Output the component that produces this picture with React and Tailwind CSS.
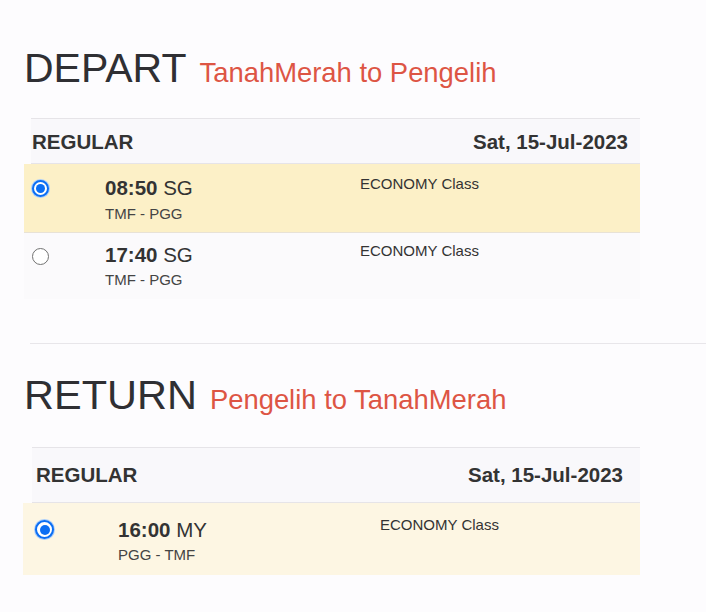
import React from 'react';

const Radio = ({ checked, size = 'sm' }) => {
  const box = size === 'lg' ? 'w-[19px] h-[19px]' : 'w-[17px] h-[17px]';
  const dot = size === 'lg' ? 'w-[10px] h-[10px]' : 'w-[9px] h-[9px]';
  if (!checked) {
    return <span className={`${box} block shrink-0 rounded-full border border-[#727272] bg-white`} />;
  }
  return (
    <span className={`${box} shrink-0 rounded-full border-2 border-[#0b6ef3] bg-white flex items-center justify-center shadow-[0_0_0_1px_#a9cdfb]`}>
      <span className={`${dot} rounded-full bg-[#0b6ef3]`} />
    </span>
  );
};

const App = () => {
  return (
    <div className="min-h-[612px] bg-[#fdfcfe] text-[#333] pl-[24px] pt-[46px] font-['Liberation_Sans',Arial,sans-serif]">
      {/* depart */}
      <div className="flex items-baseline gap-[13px]">
        <h1 className="text-[41px] leading-[44px] text-[#2f2f33]">DEPART</h1>
        <span className="text-[27.4px] leading-[32px] text-[#dd5544]">TanahMerah to Pengelih</span>
      </div>

      <div className="mt-[28px] w-[616px]">
        <div className="ml-[7px] border-t border-b border-[#e6e4e8] bg-[#f9f8fb] flex justify-between pt-[10px] pb-[8px] pl-[1px] pr-[12px]">
          <span className="text-[20.5px] leading-[26px] font-bold">REGULAR</span>
          <span className="text-[20.5px] leading-[26px] font-bold">Sat, 15-Jul-2023</span>
        </div>

        <div className="h-[69px] flex bg-[#fcf0c7] border-b border-[#e8e2d6]">
          <div className="w-[81px] pl-[8px] pt-[16px]">
            <Radio checked />
          </div>
          <div className="w-[255px] pt-[11px]">
            <div className="text-[20.5px] leading-[26px]"><b>08:50</b> SG</div>
            <div className="mt-[3px] text-[15px] leading-[20px] text-[#444]">TMF - PGG</div>
          </div>
          <div className="pt-[10px] text-[15px] leading-[20px]">ECONOMY Class</div>
        </div>

        <div className="h-[66px] flex bg-[#fbfafc]">
          <div className="w-[81px] pl-[8px] pt-[15px]">
            <Radio />
          </div>
          <div className="w-[255px] pt-[9px]">
            <div className="text-[20.5px] leading-[26px]"><b>17:40</b> SG</div>
            <div className="mt-[2px] text-[15px] leading-[20px] text-[#444]">TMF - PGG</div>
          </div>
          <div className="pt-[8px] text-[15px] leading-[20px]">ECONOMY Class</div>
        </div>
      </div>

      <div className="mt-[44px] ml-[6px] border-t border-[#e8e6ea]" />

      {/* return */}
      <div className="mt-[29px] flex items-baseline gap-[13px]">
        <h1 className="text-[41.5px] leading-[44px] text-[#2f2f33]">RETURN</h1>
        <span className="text-[27.4px] leading-[32px] text-[#dd5544]">Pengelih to TanahMerah</span>
      </div>

      <div className="mt-[30px] w-[617px] -ml-[1px]">
        <div className="ml-[9px] border-t border-b border-[#e6e4e8] bg-[#f9f8fb] flex justify-between pt-[14px] pb-[14px] pl-[4px] pr-[17px]">
          <span className="text-[20.5px] leading-[26px] font-bold">REGULAR</span>
          <span className="text-[20.5px] leading-[26px] font-bold">Sat, 15-Jul-2023</span>
        </div>

        <div className="h-[72px] flex bg-[#fdf6e3]">
          <div className="w-[95px] pl-[12px] pt-[17px]">
            <Radio checked size="lg" />
          </div>
          <div className="w-[262px] pt-[14px]">
            <div className="text-[20.5px] leading-[26px]"><b>16:00</b> MY</div>
            <div className="mt-[2px] text-[15px] leading-[20px] text-[#444]">PGG - TMF</div>
          </div>
          <div className="pt-[12px] text-[15px] leading-[20px]">ECONOMY Class</div>
        </div>
      </div>
    </div>
  );
};

export default App;
